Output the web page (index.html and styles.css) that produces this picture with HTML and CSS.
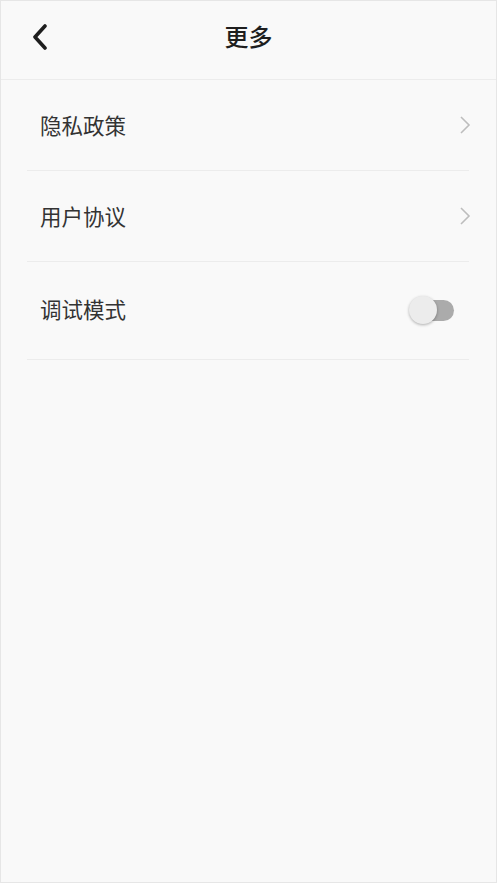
FILE: index.html
```html
<!DOCTYPE html>
<html lang="zh-CN">
<head>
<meta charset="utf-8">
<title>更多</title>
<link rel="stylesheet" href="styles.css">
</head>
<body>
<div class="page">
  <header class="nav">
    <button class="nav-back" aria-label="返回">
      <svg width="18" height="26" viewBox="0 0 18 26"><path d="M14 2 L4 13 L14 24" fill="none" stroke="#1e1e1e" stroke-width="3.6" stroke-linecap="round" stroke-linejoin="round"/></svg>
    </button>
    <h1 class="nav-title">更多</h1>
  </header>
  <ul class="list">
    <li class="row">
      <span class="row-label">隐私政策</span>
      <svg class="row-arrow" width="12" height="20" viewBox="0 0 12 20"><path d="M2 2 L10 10 L2 18" fill="none" stroke="#bdbdbd" stroke-width="1.6"/></svg>
    </li>
    <li class="row">
      <span class="row-label">用户协议</span>
      <svg class="row-arrow" width="12" height="20" viewBox="0 0 12 20"><path d="M2 2 L10 10 L2 18" fill="none" stroke="#bdbdbd" stroke-width="1.6"/></svg>
    </li>
    <li class="row row-tall">
      <span class="row-label">调试模式</span>
      <span class="switch"><span class="switch-track"></span><span class="switch-knob"></span></span>
    </li>
  </ul>
</div>
</body>
</html>
```
FILE: styles.css
```css
* { box-sizing: border-box; }
html, body { margin: 0; padding: 0; }
body {
  font-family: "Noto Sans CJK SC", "Noto Sans", sans-serif;
  background: #f9f9f9;
  color: #333;
}
.page {
  height: 883px;
  border: 1px solid #e6e6e6;
  background: #f9f9f9;
}
.nav {
  height: 79px;
  border-bottom: 1px solid #ececec;
  display: flex;
  align-items: center;
  justify-content: center;
  position: relative;
}
.nav-back {
  position: absolute;
  left: 30px;
  top: 23px;
  padding: 0;
  border: 0;
  background: none;
  display: flex;
}
.nav-title {
  margin: 0;
  font-size: 24px;
  font-weight: 500;
  color: #1e1e1e;
  line-height: 1;
  padding-bottom: 9px;
}
.list {
  list-style: none;
  margin: 0 27px 0 26px;
  padding: 0;
}
.row {
  height: 91px;
  display: flex;
  align-items: center;
  justify-content: space-between;
  border-bottom: 1px solid #ececec;
  padding: 0 0 1px 13px;
}
.row-tall { height: 98px; padding-bottom: 3px; }
.row-label {
  font-size: 21.5px;
  color: #333;
  line-height: 1;
}
.row-arrow { margin-right: -2px; }
.switch {
  position: relative;
  width: 46px;
  height: 30px;
  margin-right: 14px;
  margin-top: 2px;
}
.switch-track {
  position: absolute;
  left: 11px;
  top: 5px;
  width: 34px;
  height: 21px;
  border-radius: 11px;
  background: #ababab;
}
.switch-knob {
  position: absolute;
  left: 0;
  top: 1px;
  width: 28px;
  height: 28px;
  border-radius: 50%;
  background: #ececec;
  box-shadow: 0 1px 3px rgba(0,0,0,0.3);
}
```
